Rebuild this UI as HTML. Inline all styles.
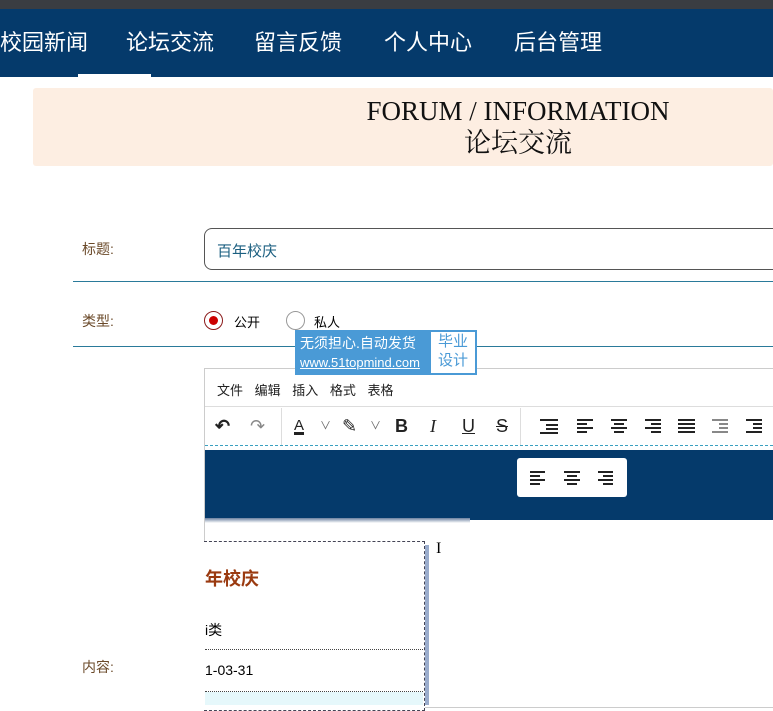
<!DOCTYPE html>
<html><head><meta charset="utf-8"><style>
*{margin:0;padding:0;box-sizing:border-box}
body{width:773px;height:705px;overflow:hidden;background:#fff;font-family:"Liberation Sans","Noto Sans CJK SC",sans-serif;position:relative}
.a{position:absolute}
.nav span{position:absolute;font-size:22px;color:#fff;line-height:30px}
.lbl{color:#6b4a2a;font-size:14px}
.tb{position:absolute;top:416px;font-size:18px;color:#222;line-height:20px}
svg.i{position:absolute;top:418px}
</style></head><body>
<div class="a" style="left:0;top:0;width:773px;height:9px;background:#3a3d42"></div>
<div class="a nav" style="left:0;top:9px;width:773px;height:68px;background:#053a6b">
<span style="left:0;top:19px">校园新闻</span>
<span style="left:126px;top:19px">论坛交流</span>
<span style="left:254px;top:19px">留言反馈</span>
<span style="left:384px;top:19px">个人中心</span>
<span style="left:514px;top:19px">后台管理</span>
</div>
<div class="a" style="left:78px;top:74px;width:73px;height:3px;background:#fff"></div>
<div class="a" style="left:33px;top:88px;width:740px;height:78px;background:#fdeee2;border-radius:3px"></div>
<div class="a" style="left:263px;top:95px;width:510px;text-align:center;font-family:'Liberation Serif','Noto Serif CJK SC',serif;font-size:27px;line-height:32px;color:#111">FORUM / INFORMATION<br>论坛交流</div>
<div class="a lbl" style="left:82px;top:239px">标题:</div>
<div class="a" style="left:204px;top:228px;width:580px;height:42px;border:1px solid #555;border-radius:8px"></div>
<div class="a" style="left:217px;top:240px;font-size:15px;color:#1b5f80">百年校庆</div>
<div class="a" style="left:73px;top:281px;width:700px;height:1px;background:#2a7a9a"></div>
<div class="a lbl" style="left:82px;top:311px">类型:</div>
<div class="a" style="left:204px;top:311px;width:19px;height:19px;border:1px solid #8b1a1a;border-radius:50%"></div>
<div class="a" style="left:209px;top:316px;width:9px;height:9px;background:#c00;border-radius:50%"></div>
<div class="a" style="left:234px;top:312px;font-size:13px">公开</div>
<div class="a" style="left:286px;top:311px;width:19px;height:19px;border:1px solid #999;border-radius:50%"></div>
<div class="a" style="left:314px;top:312px;font-size:13px">私人</div>
<div class="a" style="left:73px;top:346px;width:700px;height:1px;background:#2a7a9a"></div>
<div class="a" style="left:204px;top:368px;width:580px;height:340px;border:1px solid #ccc"></div>
<div class="a" style="left:217px;top:380px;font-size:13px;color:#222;word-spacing:8px">文件 编辑 插入 格式 表格</div>
<div class="a" style="left:205px;top:406px;width:568px;height:1px;background:#ddd"></div>
<div class="a" style="left:281px;top:408px;width:1px;height:38px;background:#ddd"></div>
<div class="a" style="left:520px;top:408px;width:1px;height:38px;background:#ddd"></div>
<div class="tb" style="left:215px;font-weight:bold">↶</div><div class="tb" style="left:250px;color:#888">↷</div>
<div class="tb" style="left:294px;font-size:15px;text-decoration:underline;text-decoration-thickness:3px">A</div><div class="tb" style="left:320px;font-size:11px;color:#666">∨</div>
<div class="tb" style="left:342px">✎</div><div class="tb" style="left:370px;font-size:11px;color:#666">∨</div>
<div class="tb" style="left:395px;font-weight:bold">B</div><div class="tb" style="left:430px;font-style:italic;font-family:'Liberation Serif',serif">I</div>
<div class="tb" style="left:462px;text-decoration:underline">U</div><div class="tb" style="left:496px;text-decoration:line-through">S</div>
<svg class="i" style="left:540px" width="18" height="16" stroke="#222" stroke-width="2"><path d="M0 2h18M6 7h12M6 11h12M0 15h18"/></svg>
<svg class="i" style="left:577px" width="18" height="16" stroke="#222" stroke-width="2"><path d="M0 2h16M0 6h10M0 10h16M0 14h10"/></svg>
<svg class="i" style="left:611px" width="18" height="16" stroke="#222" stroke-width="2"><path d="M0 2h16M3 6h10M0 10h16M3 14h10"/></svg>
<svg class="i" style="left:645px" width="18" height="16" stroke="#222" stroke-width="2"><path d="M0 2h16M6 6h10M0 10h16M6 14h10"/></svg>
<svg class="i" style="left:678px" width="18" height="16" stroke="#222" stroke-width="2"><path d="M0 2h17M0 6h17M0 10h17M0 14h17"/></svg>
<svg class="i" style="left:712px" width="18" height="16" stroke="#888" stroke-width="2"><path d="M0 2h16M7 6h9M7 10h9M0 14h16"/></svg>
<svg class="i" style="left:746px" width="18" height="16" stroke="#222" stroke-width="2"><path d="M0 2h16M7 6h9M7 10h9M0 14h16"/></svg>
<div class="a" style="left:205px;top:445px;width:568px;border-top:1px dashed #3aa0c0"></div>
<div class="a" style="left:205px;top:450px;width:568px;height:70px;background:#053a6b"></div>
<div class="a" style="left:205px;top:518px;width:265px;height:5px;background:linear-gradient(#6a7fa0,#fff)"></div>
<div class="a" style="left:517px;top:458px;width:110px;height:39px;background:#fff;border-radius:3px"></div>
<svg class="a" style="left:530px;top:471px" width="85" height="14" stroke="#222" stroke-width="2"><path d="M0 1h15M0 5h10M0 9h15M0 13h10M34 1h16M37 5h10M34 9h16M37 13h10M68 1h15M73 5h10M68 9h15M73 13h10"/></svg>
<div class="a" style="left:295px;top:330px;width:182px;height:45px;background:#4a9ad6"></div>
<div class="a" style="left:300px;top:334px;font-size:14px;color:#fff;line-height:19px">无须担心.自动发货<br><span style="font-size:13px;text-decoration:underline">www.51topmind.com</span></div>
<div class="a" style="left:431px;top:332px;width:44px;height:41px;background:#fff;color:#4a9ad6;font-size:15px;line-height:19px;text-align:center">毕业<br>设计</div>
<div class="a" style="left:204px;top:541px;width:221px;height:170px;border:1px dashed #445;border-left:none;background:#fff"></div>
<div class="a" style="left:425px;top:545px;width:4px;height:160px;background:#9aaccc"></div>
<div class="a" style="left:205px;top:565px;font-size:18px;font-weight:bold;color:#9a3a10">年校庆</div>
<div class="a" style="left:205px;top:620px;font-size:14px">i类</div>
<div class="a" style="left:205px;top:649px;width:218px;border-top:1px dotted #444"></div>
<div class="a" style="left:205px;top:662px;font-size:14px">1-03-31</div>
<div class="a" style="left:205px;top:691px;width:218px;border-top:1px dotted #444"></div>
<div class="a" style="left:205px;top:692px;width:218px;height:13px;background:#e6f8fb"></div>
<div class="a" style="left:436px;top:540px;font-size:16px;font-family:'Liberation Serif',serif">I</div>
<div class="a lbl" style="left:82px;top:657px">内容:</div>
</body></html>
